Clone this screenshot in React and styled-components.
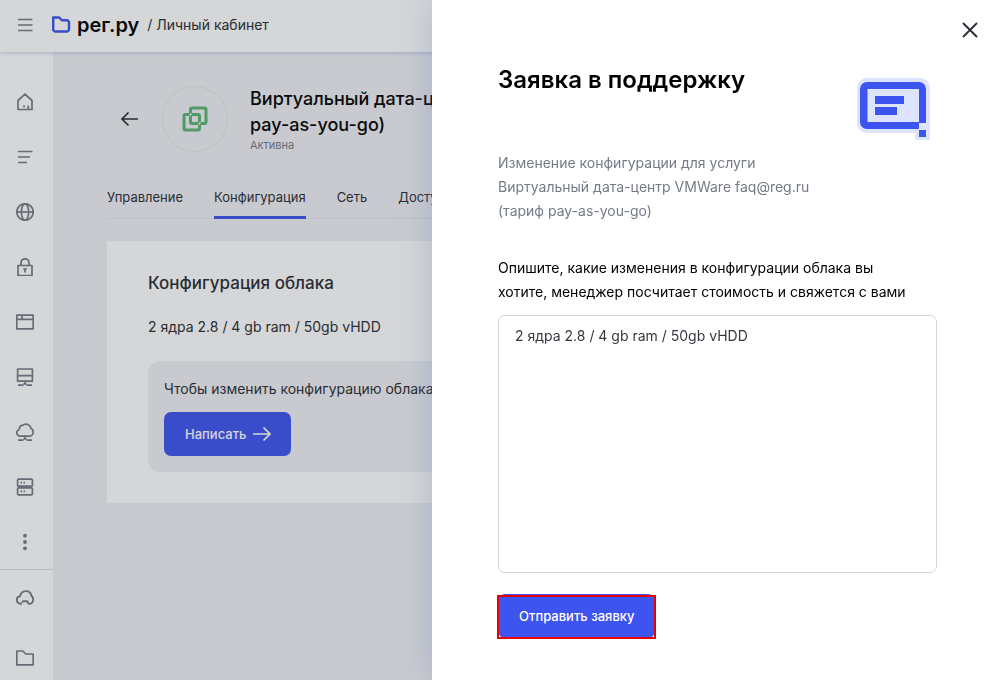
import React, { useState } from "react";
import styled, { createGlobalStyle } from "styled-components";

const GlobalStyle = createGlobalStyle`
  *, *::before, *::after { box-sizing: border-box; }
  html, body { margin: 0; padding: 0; }
  body {
    background: #f0f1f5;
    color: #292c33;
    font-family: Inter, "Liberation Sans", sans-serif;
    font-size: 14px;
    line-height: 24px;
  }
  h1, h2, h3, p { margin: 0; }
  button, textarea { font-family: inherit; }
`;

const Shell = styled.div`
  display: flex;
  flex-direction: column;
  height: 100vh;
  overflow: hidden;
`;

const TopBar = styled.header`
  position: relative;
  z-index: 1;
  display: flex;
  align-items: center;
  flex: none;
  height: 52px;
  padding: 0 17px 2px;
  background: #fff;
  box-shadow: 0 1px 4px rgba(80, 110, 190, 0.3);
`;

const IconButton = styled.button`
  display: flex;
  align-items: center;
  justify-content: center;
  padding: 0;
  border: 0;
  background: none;
  color: ${(p) => p.$color || "#757b86"};
  cursor: pointer;
`;

const Brand = styled.a`
  display: flex;
  align-items: center;
  gap: 6px;
  margin-left: 18px;
  color: #000;
  font-size: 20px;
  font-weight: 600;
  text-decoration: none;
`;

const Crumb = styled.span`
  margin-left: 8px;
`;

const Body = styled.div`
  display: flex;
  flex: 1;
  min-height: 0;
`;

const Sidebar = styled.nav`
  flex: none;
  width: 53px;
  padding-top: 22px;
  background: #fff;
`;

const NavGroup = styled.div`
  display: flex;
  flex-direction: column;
  gap: ${(p) => p.$gap || 0}px;
  padding-right: 3px;
  & + & { border-top: 1px solid #dcdde0; }
`;

const NavLink = styled.a`
  display: flex;
  align-items: center;
  justify-content: center;
  height: 55px;
  color: #757b86;
`;

const Main = styled.main`
  flex: 1;
  min-width: 0;
  padding: 32px 54px;
`;

const ServiceHead = styled.div`
  display: flex;
  align-items: flex-start;
  padding-left: 12px;
`;

const BackLink = styled.a`
  display: flex;
  align-items: center;
  height: 70px;
  margin-right: 23px;
  color: #292c33;
`;

const ServiceBadge = styled.div`
  display: flex;
  align-items: center;
  justify-content: center;
  width: 66px;
  height: 66px;
  margin: 2px 22px 0 0;
  border: 1px solid #e2e3e8;
  border-radius: 50%;
`;

const ServiceTitle = styled.h1`
  padding-top: 2px;
  color: #000;
  font-size: 18px;
  font-weight: 500;
  line-height: 26px;
  white-space: nowrap;
`;

const Status = styled.p`
  color: #757b86;
  font-size: 11px;
  line-height: 14px;
`;

const Tabs = styled.nav`
  display: flex;
  gap: 31px;
  margin-top: 31px;
  border-bottom: 1px solid #e2e3e8;
`;

const Tab = styled.a`
  height: 34px;
  margin-bottom: -1px;
  border-bottom: 3px solid ${(p) => (p.$active ? "#3d54f0" : "transparent")};
  color: inherit;
  font-size: 13px;
  line-height: 24px;
  text-decoration: none;
  white-space: nowrap;
`;

const Card = styled.section`
  margin-top: 22px;
  padding: 30px 40px 31px 41px;
  background: #fff;
`;

const CardTitle = styled.h2`
  font-size: 17px;
  font-weight: 500;
`;

const CardText = styled.p`
  margin-top: 20px;
`;

const Notice = styled.div`
  margin-top: 22px;
  padding: 16px;
  border-radius: 12px;
  background: #f0f1f5;
  white-space: nowrap;
`;

const Button = styled.button`
  position: relative;
  display: inline-flex;
  align-items: center;
  justify-content: center;
  gap: 7px;
  height: 44px;
  padding: 0 20px 0 21px;
  border: 0;
  border-radius: 7px;
  background: #3d54f0;
  color: #fff;
  font-size: 13px;
  font-weight: 500;
  line-height: 20px;
  cursor: pointer;
`;

const WriteButton = styled(Button)`
  display: flex;
  margin-top: 11px;
`;

const Scrim = styled.div`
  position: fixed;
  inset: 0;
  z-index: 2;
  background: rgba(45, 48, 55, 0.2);
`;

const Drawer = styled.aside`
  position: fixed;
  inset: 0 0 0 auto;
  z-index: 3;
  width: 568px;
  max-width: 100%;
  padding: 17px 17px 0 66px;
  background: #fff;
  box-shadow: 0 0 32px rgba(90, 115, 190, 0.3);
  overflow: auto;
`;

const CloseRow = styled.div`
  display: flex;
  justify-content: flex-end;
`;

const DrawerForm = styled.form`
  padding-right: 46px;
`;

const DrawerHead = styled.div`
  display: flex;
  justify-content: space-between;
  align-items: flex-start;
  padding: 19px 6px 0 0;
`;

const DrawerTitle = styled.h2`
  color: #000;
  font-size: 24px;
  font-weight: 600;
  line-height: 36px;
`;

const Art = styled.svg`
  display: block;
  margin-top: 16px;
`;

const Summary = styled.p`
  max-width: 340px;
  margin-top: 11px;
  color: #757b86;
`;

const FieldLabel = styled.label`
  display: block;
  max-width: 420px;
  margin-top: 33px;
  color: #000;
`;

const TextArea = styled.textarea`
  display: block;
  width: 100%;
  height: 258px;
  margin-top: 11px;
  padding: 8px 16px;
  border: 1px solid #d3d4da;
  border-radius: 7px;
  outline: 0;
  background: #fff;
  color: #36393f;
  font-size: 14px;
  line-height: 24px;
  resize: none;
`;

const SubmitButton = styled(Button)`
  margin-top: 21px;
  &::after {
    content: "";
    position: absolute;
    inset: 1px -1px -1px;
    border: 2px solid #e60000;
  }
`;

const Svg = ({ w = 18, h = 18, sw = 1.7, children, ...rest }) => (
  <svg width={w} height={h} viewBox={`0 0 ${w} ${h}`} fill="none" stroke="currentColor"
    strokeWidth={sw} strokeLinejoin="round" aria-hidden="true" {...rest}>
    {children}
  </svg>
);

const icons = {
  home: <path d="M2 7.500 9 1.200l7 6.300v9H2zM12.300 16.500v-4M8 12.200v2" />,
  list: <path d="M2 3.500h14.500M2 9h12M2 14.500h9" />,
  globe: (
    <>
      <circle cx="9" cy="9" r="8.200" />
      <ellipse cx="9" cy="9" rx="3.600" ry="8.200" />
      <path d="M1 9h16" />
    </>
  ),
  lock: <path d="M2 7.500h14v10H2zM5 7.500V4.800a4 4 0 0 1 8 0v2.700M7.200 11h3.600M9 11v3.500" />,
  window: <path d="M.8 2.200h16.400v13.600H.8zM.8 6.400h16.400M6 2.200v4" />,
  hosting: <path d="M1.600 1h14.800v12.200H1.600zM1.600 7.700h14.800M9 13.200V16M2 17.100h5.500M10.500 17.100H16M7.500 15.800h3" />,
  cloud: (
    <path d="M4.500 13.200C2.200 13.200.8 11.700.8 9.700.8 8 1.900 6.900 3.200 6.500 3.200 3.800 5 2.200 7 2.200c.8-1.300 4.500-1.800 6.200.2 1.200.8 1.600 1.900 1.700 2.900 1.500.7 2.300 1.900 2.300 3.700 0 2.500-1.600 4.200-3.700 4.200zM9 13.200v3M2 17.100h5.500M10.500 17.100H16M7.500 15.800h3" />
  ),
  server: (
    <>
      <rect x="1.600" y="1.200" width="14.800" height="7" rx="1" />
      <rect x="1.600" y="9.800" width="14.800" height="7" rx="1" />
      <path d="M4.500 4.700H6M7.500 4.700H9M4.500 13.300H6M7.500 13.300H9" />
    </>
  ),
  more: (
    <g fill="currentColor" stroke="none">
      <circle cx="9" cy="2.700" r="1.900" />
      <circle cx="9" cy="9" r="1.900" />
      <circle cx="9" cy="15.300" r="1.900" />
    </g>
  ),
  cloudOpen: (
    <path d="M6 14.700H4.500C2.300 14.700.8 13 .8 10.900c0-2.100 1.300-3.400 3.200-3.500C4.500 4.400 6.900 2.100 10 2.100c3.100 0 5 2 5.400 4.700 1.100.8 1.800 2 1.800 3.600 0 2.500-1.700 4.300-4 4.300H12.600l-1.400-2.400H7L6 13.500" strokeWidth="1.900" />
  ),
  folder: <path d="M.8 2h6l3 3h7.400v10.800H.8z" />,
};

const mainNav = [
  ["home", "Главная"], ["list", "Услуги"], ["globe", "Домены"], ["lock", "SSL"],
  ["window", "Сайты"], ["hosting", "Хостинг"], ["cloud", "Облако"],
  ["server", "Серверы"], ["more", "Ещё"],
];
const extraNav = [["cloudOpen", "Облачные серверы"], ["folder", "Документы"]];

const tabs = ["Управление", "Конфигурация", "Сеть", "Доступы"];

const ArrowRight = () => (
  <Svg w={18} h={16}><path d="M0 8h17M10.500 1.500 17 8l-6.500 6.500" strokeLinejoin="miter" /></Svg>
);

export default function App() {
  const [text, setText] = useState("2 ядра 2.8 / 4 gb ram / 50gb vHDD");
  return (
    <>
      <GlobalStyle />
      <Shell>
        <TopBar>
          <IconButton type="button" aria-label="Меню">
            <Svg w={16} h={16}><path d="M1 2.500h14.500M1 8h14.500M1 13.500h14.500" /></Svg>
          </IconButton>
          <Brand href="#">
            <svg width="20" height="18" viewBox="0 0 20 18" fill="none" stroke="#3d54f0" strokeWidth="2.400" aria-hidden="true">
              <path d="M2.200 1.500h6l2.600 2.800h5.700l1.500 1.500v8.200L16.500 15.500H3.700L2.200 14z" strokeLinejoin="round" />
            </svg>
            рег.ру
          </Brand>
          <Crumb>/ Личный кабинет</Crumb>
        </TopBar>
        <Body>
          <Sidebar>
            <NavGroup>
              {mainNav.map(([id, label]) => (
                <NavLink key={id} href="#" aria-label={label}><Svg>{icons[id]}</Svg></NavLink>
              ))}
            </NavGroup>
            <NavGroup $gap={5}>
              {extraNav.map(([id, label]) => (
                <NavLink key={id} href="#" aria-label={label}><Svg>{icons[id]}</Svg></NavLink>
              ))}
            </NavGroup>
          </Sidebar>
          <Main>
            <ServiceHead>
              <BackLink href="#" aria-label="Назад">
                <Svg w={20} h={16}><path d="M19 8H3M9.500 1.500 3 8l6.500 6.500" strokeLinejoin="miter" /></Svg>
              </BackLink>
              <ServiceBadge>
                <Svg w={26} h={26} sw={3} stroke="#5cb571">
                  <rect x="8.500" y="2" width="15.500" height="15.500" rx="1.500" />
                  <rect x="2" y="8.500" width="15.500" height="15.500" rx="1.500" />
                  <path d="M9.500 7.500l-2 2M18.500 16.500l-2 2" stroke="#f0f1f5" strokeWidth="1.500" />
                </Svg>
              </ServiceBadge>
              <div>
                <ServiceTitle>
                  Виртуальный дата-центр<br />pay-as-you-go)
                </ServiceTitle>
                <Status>Активна</Status>
              </div>
            </ServiceHead>
            <Tabs>
              {tabs.map((t) => (
                <Tab key={t} href="#" $active={t === "Конфигурация"}>{t}</Tab>
              ))}
            </Tabs>
            <Card>
              <CardTitle>Конфигурация облака</CardTitle>
              <CardText>2 ядра 2.8 / 4 gb ram / 50gb vHDD</CardText>
              <Notice>
                <p>Чтобы изменить конфигурацию облака</p>
                <WriteButton type="button">Написать <ArrowRight /></WriteButton>
              </Notice>
            </Card>
          </Main>
        </Body>
      </Shell>
      <Scrim />
      <Drawer role="dialog" aria-labelledby="drawer-title">
        <CloseRow>
          <IconButton type="button" aria-label="Закрыть" $color="#292c33">
            <Svg w={26} h={26} sw={1.8}><path d="M6 6l14 14M20 6 6 20" /></Svg>
          </IconButton>
        </CloseRow>
        <DrawerForm onSubmit={(e) => e.preventDefault()}>
          <DrawerHead>
            <DrawerTitle id="drawer-title">Заявка в поддержку</DrawerTitle>
            <Art width="74" height="62" viewBox="0 0 74 62" aria-hidden="true">
              <path d="M10 0h53a10 10 0 0 1 10 10v52H58v-7H10A10 10 0 0 1 0 45V10A10 10 0 0 1 10 0z" fill="#dce5fd" />
              <path d="M10 4h52a7 7 0 0 1 7 7v34h-7V11H10.500v33H62v7H10a7 7 0 0 1-7-7V11a7 7 0 0 1 7-7z" fill="#3d54f0" />
              <path d="M62 45h7v6h-7z" fill="#dce5fd" />
              <path d="M62 52h7v7h-7zM18 18h29v8H18zM18 29h22v8H18z" fill="#3d54f0" />
            </Art>
          </DrawerHead>
          <Summary>
            Изменение конфигурации для услуги Виртуальный дата-центр VMWare faq@reg.ru (тариф pay-as-you-go)
          </Summary>
          <FieldLabel htmlFor="request">
            Опишите, какие изменения в конфигурации облака вы хотите, менеджер посчитает стоимость и свяжется с вами
          </FieldLabel>
          <TextArea id="request" value={text} onChange={(e) => setText(e.target.value)} />
          <SubmitButton type="submit">Отправить заявку</SubmitButton>
        </DrawerForm>
      </Drawer>
    </>
  );
}
